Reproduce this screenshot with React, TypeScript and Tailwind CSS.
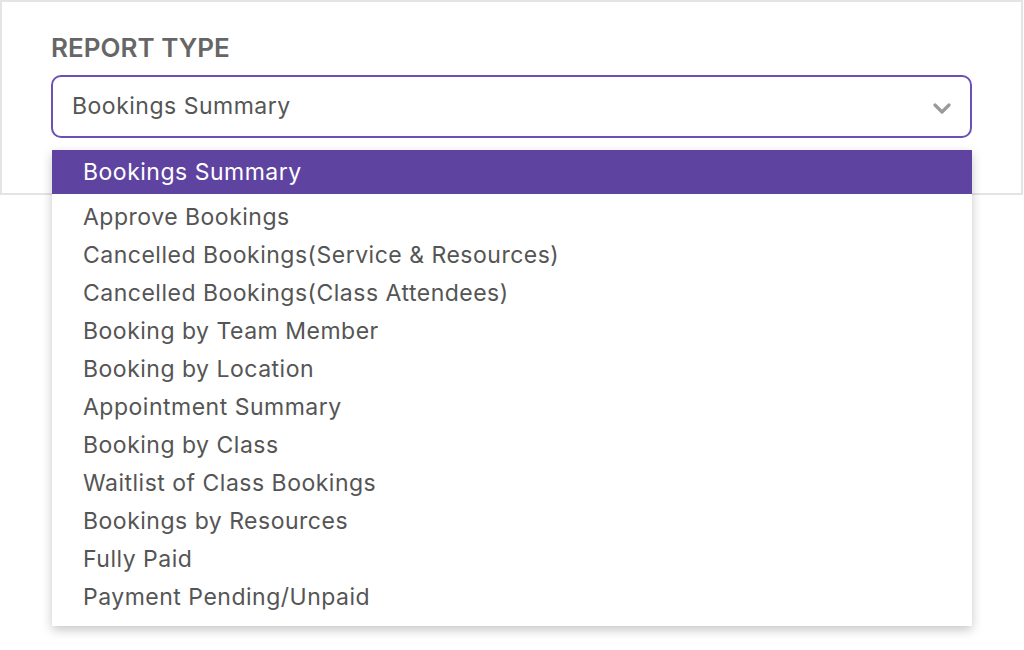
import React from "react";

const items = [
  "Approve Bookings",
  "Cancelled Bookings(Service & Resources)",
  "Cancelled Bookings(Class Attendees)",
  "Booking by Team Member",
  "Booking by Location",
  "Appointment Summary",
  "Booking by Class",
  "Waitlist of Class Bookings",
  "Bookings by Resources",
  "Fully Paid",
  "Payment Pending/Unpaid",
];

export default function App() {
  return (
    <div className="relative w-[1024px] h-[650px] bg-white font-['Inter','Open_Sans',sans-serif] text-[#555555]">
      <div className="w-[1023px] h-[195px] border-2 border-[#e4e4e4] pl-[49px] pr-[49px] pt-[30px]">
        <div className="text-[26px] leading-[32px] font-semibold text-[#666666]">REPORT TYPE</div>
        <div className="mt-[11px] h-[63px] border-2 border-[#6b51b3] rounded-[10px] flex items-center justify-between pl-[19px] pr-[19px]">
          <span className="text-[23px] text-[#555555] tracking-[0.5px]">Bookings Summary</span>
          <svg width="18" height="12" viewBox="0 0 18 12" className="mt-[4px]">
            <polyline points="2,2 9,9 16,2" fill="none" stroke="#9a9a9a" strokeWidth="3.2" strokeLinecap="round" strokeLinejoin="round" />
          </svg>
        </div>
      </div>
      <div className="absolute left-[52px] top-[150px] w-[920px] bg-white shadow-[0_4px_10px_rgba(0,0,0,0.22)] pb-[10px]">
        <div className="h-[44px] bg-[#5e43a0] text-white flex items-center pl-[31px] text-[23px] tracking-[0.5px]">
          Bookings Summary
        </div>
        <div className="pt-[4px]">
          {items.map((t) => (
            <div key={t} className="h-[38px] flex items-center pl-[31px] text-[23px] text-[#555555] tracking-[0.5px]">
              {t}
            </div>
          ))}
        </div>
      </div>
    </div>
  );
}
